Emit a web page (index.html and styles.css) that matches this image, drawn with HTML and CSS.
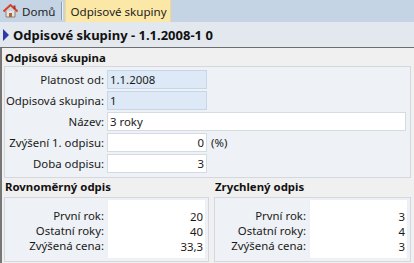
FILE: index.html
```html
<!DOCTYPE html>
<html lang="cs">
<head>
<meta charset="utf-8">
<link rel="stylesheet" href="styles.css">
</head>
<body>
<div class="tabs">
  <div class="tab home">
    <svg class="home-ico" width="15" height="14" viewBox="0 0 15 14">
      <path d="M3 7 L3 13 L12 13 L12 7" fill="#e8e4de" stroke="#8a7f76" stroke-width="1"/>
      <rect x="6" y="9" width="3" height="4" fill="#b5643a"/>
      <path d="M0.5 7.5 L7.5 1 L14.5 7.5" fill="none" stroke="#d9412a" stroke-width="2"/>
      <rect x="10.5" y="1.5" width="2" height="3.5" fill="#a33a24"/>
    </svg>
    <span>Domů</span>
  </div>
  <div class="sep"></div>
  <div class="tab active">Odpisové skupiny</div>
</div>
<div class="title">
  <span class="tri"></span>
  <span>Odpisové skupiny - 1.1.2008-1 0</span>
</div>
<div class="main">
  <div class="sec-title">Odpisová skupina</div>
  <div class="group form">
    <label>Platnost od:</label><div class="inp ro">1.1.2008</div><div></div>
    <label>Odpisová skupina:</label><div class="inp ro">1</div><div></div>
    <label>Název:</label><div class="inp wide">3 roky</div>
    <label>Zvýšení 1. odpisu:</label><div class="inp num">0</div><div class="unit">(%)</div>
    <label>Doba odpisu:</label><div class="inp num">3</div><div></div>
  </div>
  <div class="split">
    <div class="col">
      <div class="sec-title">Rovnoměrný odpis</div>
      <div class="group small">
        <div class="labels"><div>První rok:</div><div>Ostatní roky:</div><div>Zvýšená cena:</div></div>
        <div class="vals"><div>20</div><div>40</div><div>33,3</div></div>
      </div>
    </div>
    <div class="col right">
      <div class="sec-title">Zrychlený odpis</div>
      <div class="group small">
        <div class="labels"><div>První rok:</div><div>Ostatní roky:</div><div>Zvýšená cena:</div></div>
        <div class="vals"><div>3</div><div>4</div><div>3</div></div>
      </div>
    </div>
  </div>
</div>
</body>
</html>
```
FILE: styles.css
```css
html, body {
  margin: 0;
  padding: 0;
  background: #f0f0f0;
  font-family: "Noto Sans", "Open Sans", sans-serif;
  font-size: 11.4px;
  color: #1a1a1a;
  width: 414px;
  height: 263px;
  overflow: hidden;
}
.tabs {
  height: 22px;
  background: #c4d4e4;
  display: flex;
  align-items: stretch;
}
.tab {
  display: flex;
  align-items: center;
  font-size: 11.6px;
  color: #1e1e1e;
}
.home {
  padding-left: 3px;
  padding-right: 6px;
  gap: 4px;
}
.home-ico { display: block; }
.sep {
  width: 1px;
  margin: 2px 2px 2px 0;
  background: #8d9cab;
  border-right: 1px solid #e6eef6;
}
.active {
  background: #fce8a6;
  padding: 0 3px 0 4px;
  border-left: 1px solid #f3d98a;
  border-right: 1px solid #f3d98a;
}
.title {
  height: 25px;
  background: #e3e7ee;
  border-bottom: 1px solid #6e6e6e;
  display: flex;
  align-items: center;
  font-weight: bold;
  font-size: 13px;
  color: #111;
  padding-left: 3px;
  gap: 4px;
}
.tri {
  width: 0;
  height: 0;
  border-top: 6px solid transparent;
  border-bottom: 6px solid transparent;
  border-left: 6px solid #2b3aa8;
}
.main {
  border-left: 2px solid #777;
  padding: 0 3px 0 2px;
  height: 215px;
}
.sec-title {
  height: 18px;
  line-height: 20px;
  font-weight: bold;
  font-size: 11.4px;
  padding-left: 1px;
  color: #111;
}
.group {
  background: #eef1f5;
  border: 1px solid #d3d8df;
}
.form {
  display: grid;
  grid-template-columns: 99px 100px 1fr;
  column-gap: 3px;
  row-gap: 2px;
  padding: 3px 4px 4px 0;
  align-items: center;
}
.form label {
  text-align: right;
  white-space: nowrap;
}
.inp {
  height: 17px;
  line-height: 17px;
  border: 1px solid #d4dbe3;
  background: #fff;
  padding: 0 2px;
  white-space: nowrap;
}
.inp.ro {
  background: #dde9f6;
  border-color: #c7d6e6;
}
.inp.wide {
  grid-column: 2 / 4;
}
.inp.num {
  text-align: right;
}
.unit {
  padding-left: 1px;
}
.split {
  display: flex;
  gap: 5px;
}
.col {
  width: 205px;
}
.col.right {
  width: 197px;
}
.col .sec-title {
  height: 19px;
  line-height: 17px;
}
.small {
  display: flex;
  padding: 1px 2px 2px 0;
  gap: 3px;
}
.labels, .vals {
  padding-top: 9px;
  height: 49px;
  line-height: 15px;
}
.labels {
  width: 99px;
  text-align: right;
}
.right .labels {
  width: 91px;
}
.vals {
  flex: 1;
  background: #fff;
  border: 1px solid #eceff3;
  text-align: right;
  padding-right: 2px;
}
```
